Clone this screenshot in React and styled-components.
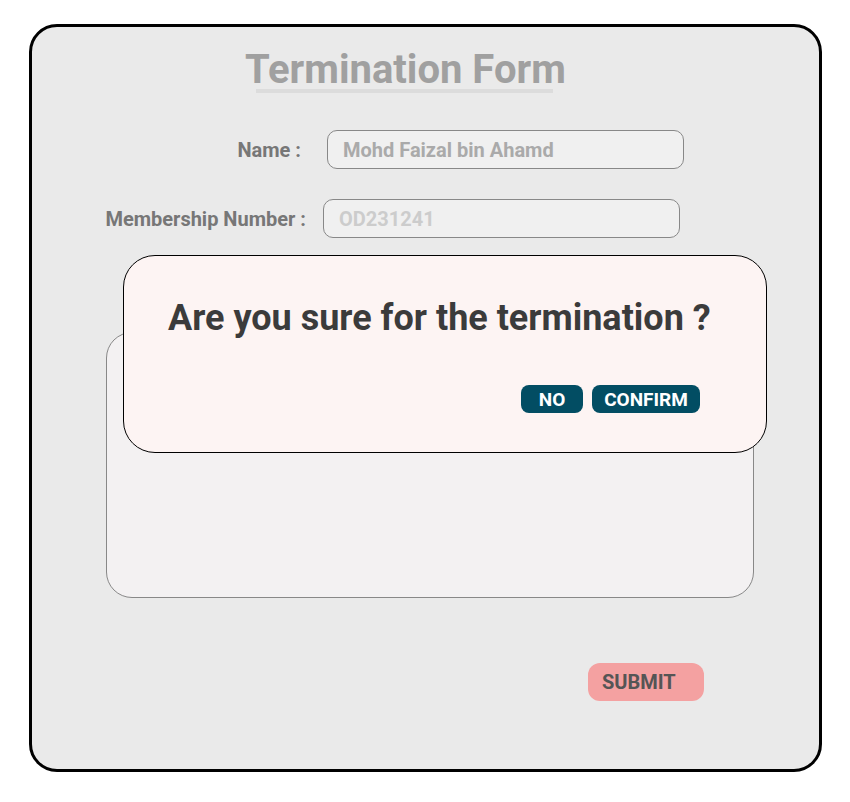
import React from 'react';
import styled, { createGlobalStyle } from 'styled-components';

const GlobalStyle = createGlobalStyle`
  body {
    margin: 0;
    background: #ffffff;
    font-family: Roboto, "Liberation Sans", sans-serif;
  }
`;

const Page = styled.div`
  padding: 24px 0 0 29px;
`;

const Card = styled.div`
  position: relative;
  width: 787px;
  height: 742px;
  border: 3px solid #000000;
  border-radius: 28px;
  background: #eaeaea;
  box-sizing: content-box;
`;

const Title = styled.h1`
  margin: 0;
  padding: 23px 0 0 213px;
  font-size: 40px;
  font-weight: 700;
  color: #a0a0a0;
  line-height: 40px;
`;

const TitleLine = styled.div`
  margin: -1px 0 0 224px;
  width: 297px;
  height: 4px;
  background: #dcdcdc;
`;

const Fields = styled.div`
  display: flex;
  flex-direction: column;
  gap: 30px;
  margin-top: 37px;
`;

const Row = styled.div`
  display: flex;
  align-items: center;
`;

const Label = styled.label`
  width: ${(p) => p.$width}px;
  margin-right: ${(p) => p.$gap}px;
  text-align: right;
  font-size: 20px;
  font-weight: 700;
  color: #777777;
  white-space: nowrap;
`;

const Field = styled.div`
  width: 357px;
  height: 39px;
  box-sizing: border-box;
  padding-left: 15px;
  display: flex;
  align-items: center;
  border: 1px solid #888888;
  border-radius: 10px;
  background: #f0f0f0;
  font-size: 20px;
  font-weight: 700;
  color: ${(p) => p.$color};
`;

const TextBox = styled.div`
  margin: 94px 0 0 74px;
  width: 648px;
  height: 266px;
  box-sizing: border-box;
  border: 1px solid #888888;
  border-radius: 26px;
  background: #f3f1f2;
`;

const Footer = styled.div`
  display: flex;
  margin: 65px 0 0 556px;
`;

const SubmitButton = styled.button`
  width: 116px;
  height: 38px;
  padding: 0 0 0 14px;
  text-align: left;
  border: none;
  border-radius: 12px;
  background: #f4a1a1;
  font-family: inherit;
  font-size: 20px;
  font-weight: 700;
  color: #555555;
`;

const Modal = styled.div`
  position: absolute;
  left: 91px;
  top: 228px;
  width: 644px;
  height: 198px;
  box-sizing: border-box;
  border: 1px solid #000000;
  border-radius: 32px;
  background: #fdf4f3;
  padding: 42px 66px 0 44px;
`;

const Question = styled.h2`
  margin: 0;
  font-size: 36px;
  font-weight: 700;
  color: #3b3b3b;
  line-height: 40px;
  white-space: nowrap;
`;

const Actions = styled.div`
  display: flex;
  justify-content: flex-end;
  gap: 9px;
  margin-top: 47px;
`;

const ActionButton = styled.button`
  height: 28px;
  width: ${(p) => p.$width}px;
  padding: 0;
  border: none;
  border-radius: 8px;
  background: #024d63;
  font-family: inherit;
  font-size: 19px;
  font-weight: 700;
  color: #ffffff;
`;

export default function App() {
  return (
    <>
      <GlobalStyle />
      <Page>
        <Card>
          <Title>Termination Form</Title>
          <TitleLine />
          <Fields>
            <Row>
              <Label $width={269} $gap={26}>Name :</Label>
              <Field $color="#aaaaaa">Mohd Faizal bin Ahamd</Field>
            </Row>
            <Row>
              <Label $width={274} $gap={17}>Membership Number :</Label>
              <Field $color="#cccccc">OD231241</Field>
            </Row>
          </Fields>
          <TextBox />
          <Footer>
            <SubmitButton>SUBMIT</SubmitButton>
          </Footer>
          <Modal>
            <Question>Are you sure for the termination ?</Question>
            <Actions>
              <ActionButton $width={62}>NO</ActionButton>
              <ActionButton $width={108}>CONFIRM</ActionButton>
            </Actions>
          </Modal>
        </Card>
      </Page>
    </>
  );
}
